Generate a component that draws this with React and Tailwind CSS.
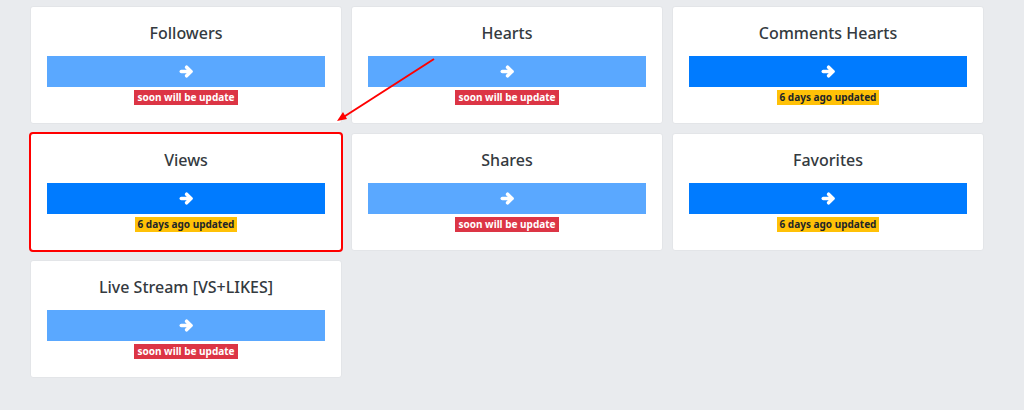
import React from 'react';

const SERVICES = [
    { name: 'Followers', ready: false },
    { name: 'Hearts', ready: false },
    { name: 'Comments Hearts', ready: true },
    { name: 'Views', ready: true, marked: true },
    { name: 'Shares', ready: false },
    { name: 'Favorites', ready: true },
    { name: 'Live Stream [VS+LIKES]', ready: false },
];

// chunky right arrow, like the old font-awesome glyph
const ArrowIcon = () => (
    <svg viewBox="0 0 15 15" width="15" height="15" fill="none" stroke="currentColor" strokeWidth="3.6" strokeLinecap="round" strokeLinejoin="round">
        <path d="M2.3 7.5H11.8" />
        <path d="M7.6 3.2L11.9 7.5L7.6 11.8" />
    </svg>
);

const ServiceCard = ({ service }) => (
    <div
        className={`relative bg-white rounded-[3px] border border-[#e3e5e8] px-4 pt-[15px] h-[118px] flex flex-col items-center ${service.marked ? 'outline-2 outline-[#ff0000] -outline-offset-1' : ''}`}
    >
        <h5 className="text-[16px] leading-[22px] font-medium text-[#343a40]">{service.name}</h5>
        <button
            className={`mt-3 w-full h-[31px] flex items-center justify-center text-white ${service.ready ? 'bg-[#007bff]' : 'bg-[#5aa8ff]'}`}
        >
            <ArrowIcon />
        </button>
        {service.ready ? (
            <span className="mt-[3px] h-[15px] px-[3px] flex items-center bg-[#ffc107] text-[#212529] text-[10px] font-bold">
                6 days ago updated
            </span>
        ) : (
            <span className="mt-[3px] h-[15px] px-[3px] flex items-center bg-[#dc3545] text-white text-[10px] font-bold">
                soon will be update
            </span>
        )}
    </div>
);

export default function App() {
    return (
        <div className="relative w-[1024px] h-[410px] bg-[#e9ebee] overflow-hidden" style={{ fontFamily: '"Noto Sans", "Open Sans", sans-serif' }}>
            <div className="grid grid-cols-[312px_312px_312px] gap-[9px] pl-[30px] pt-[6px]">
                {SERVICES.map(s => (
                    <ServiceCard key={s.name} service={s} />
                ))}
            </div>
            {/* annotation arrow pointing at Views */}
            <svg className="absolute left-0 top-0 pointer-events-none" width="1024" height="410">
                <line x1="434" y1="59" x2="342" y2="118" stroke="#ff0000" strokeWidth="2" />
                <polygon points="337,121 343,112 347,119" fill="#ff0000" />
            </svg>
        </div>
    );
}
